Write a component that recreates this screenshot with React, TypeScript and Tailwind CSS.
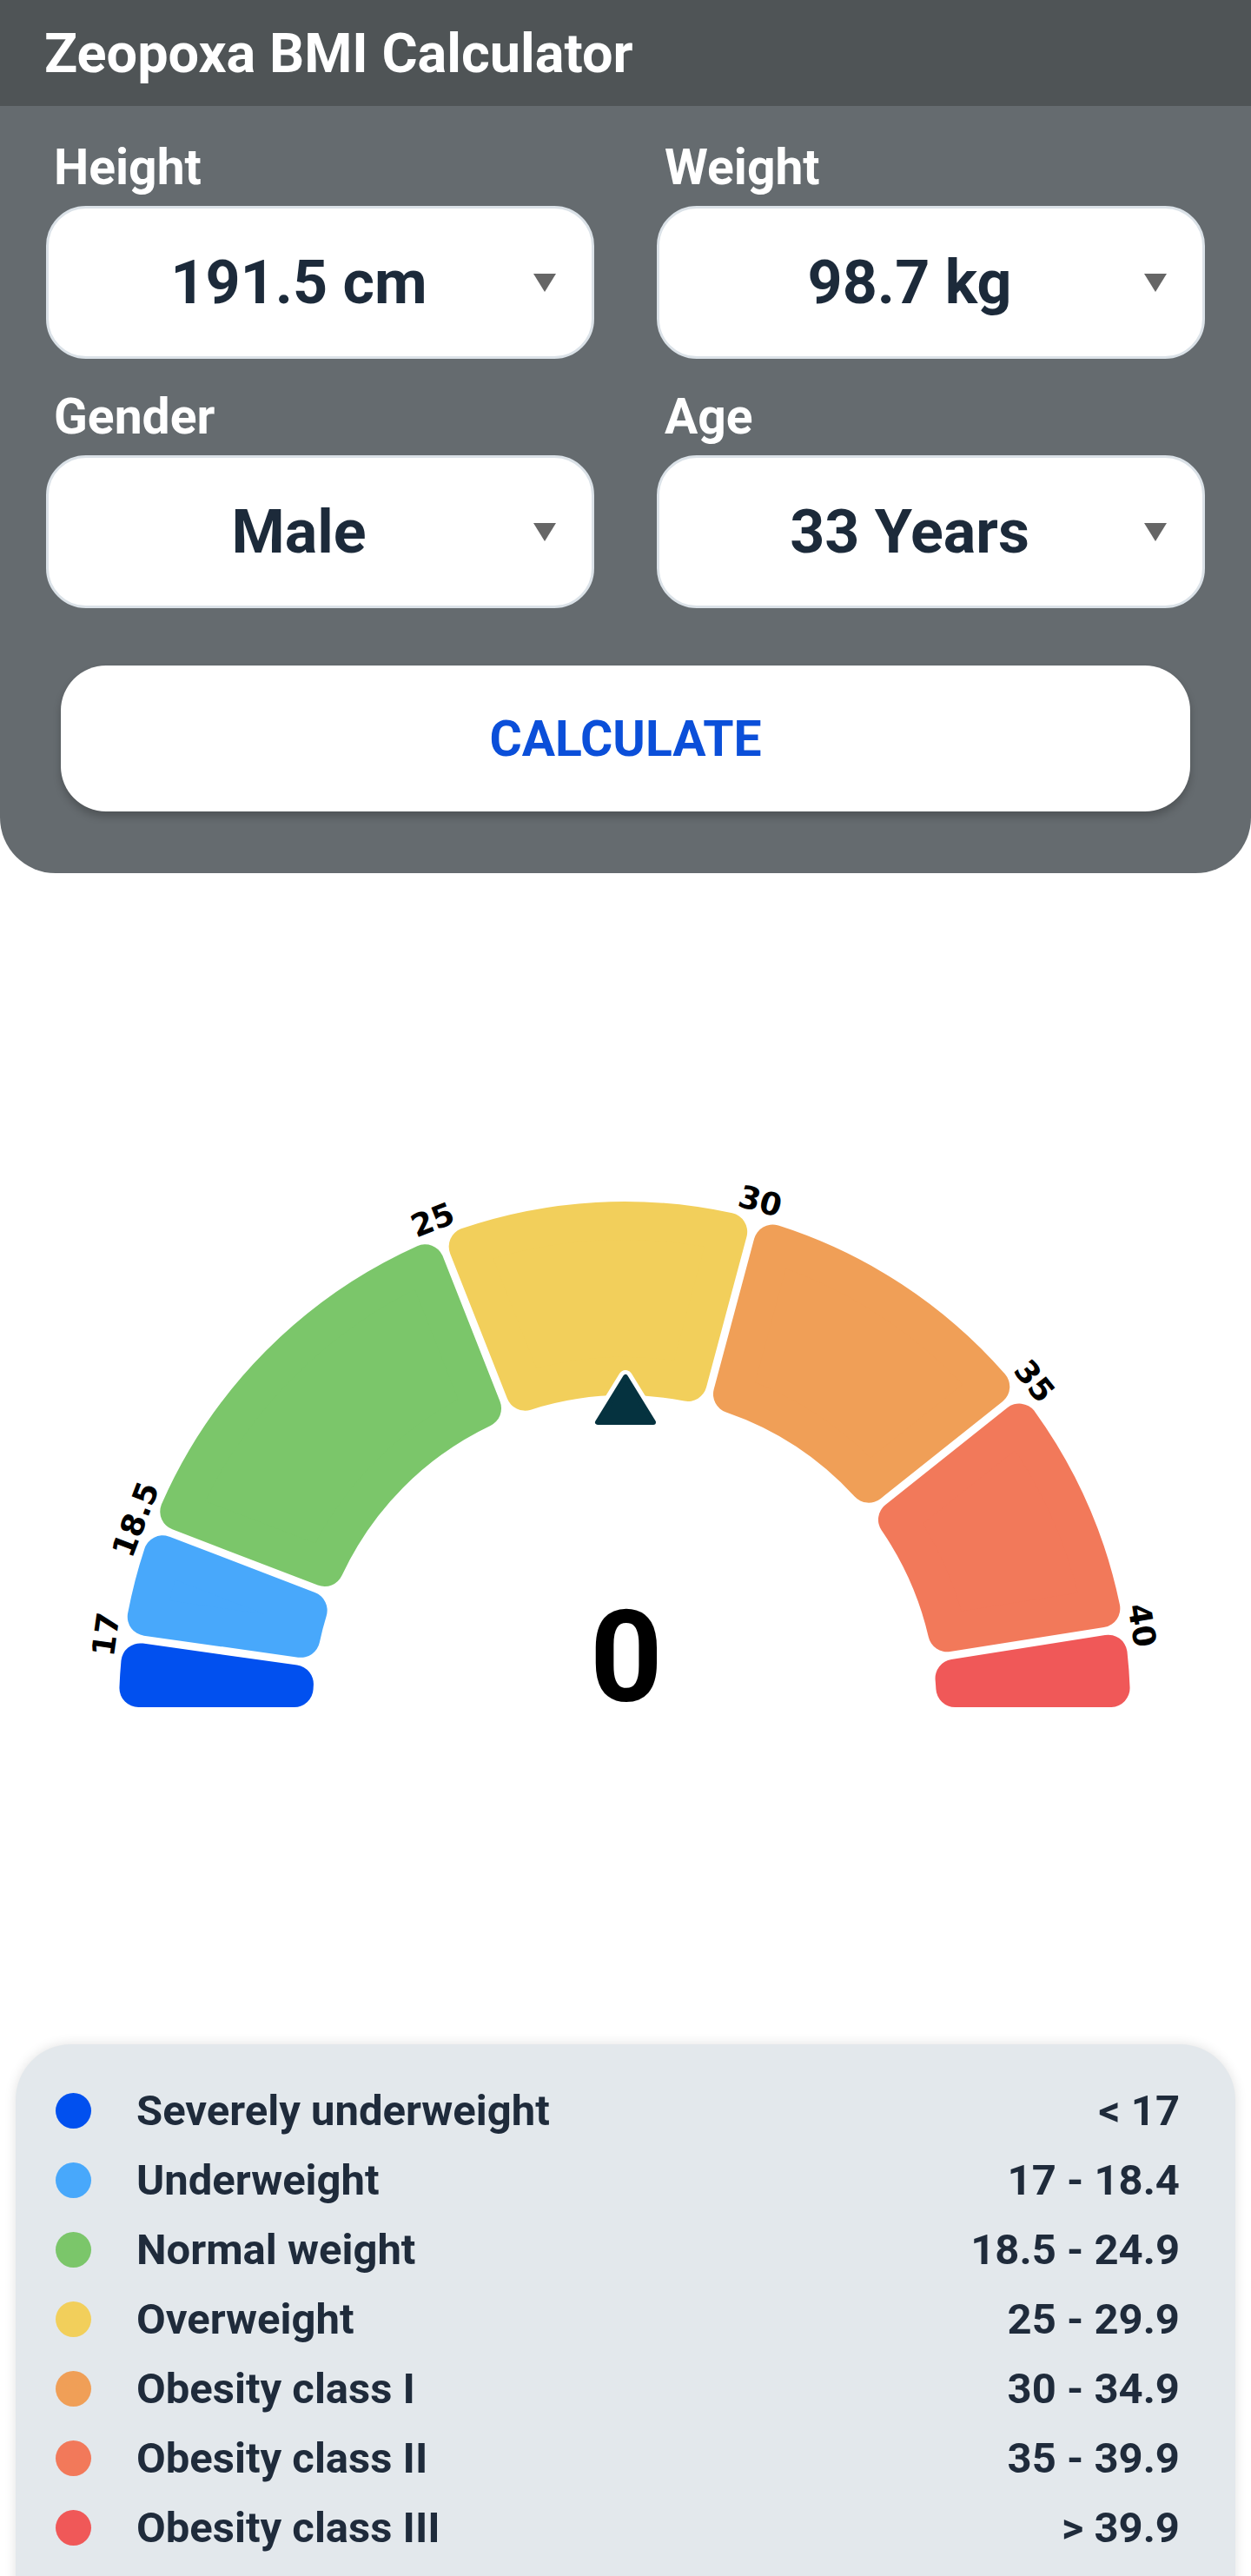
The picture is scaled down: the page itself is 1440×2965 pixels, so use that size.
import React from "react";

const CX = 719;
const CY = 960;
const R_OUT = 582;
const R_IN = 359;
const CORNER = 22;
const GAP = 9;

const segments = [
  { a0: 0, a1: 8, color: "#0150ef" },
  { a0: 8, a1: 21, color: "#48a8fb" },
  { a0: 21, a1: 68.5, color: "#7bc66a" },
  { a0: 68.5, a1: 105, color: "#f2cf5b" },
  { a0: 105, a1: 141.5, color: "#f09f57" },
  { a0: 141.5, a1: 171, color: "#f2795a" },
  { a0: 171, a1: 180, color: "#f05858" },
];

const ticks = [
  { label: "17", a: 8 },
  { label: "18.5", a: 21 },
  { label: "25", a: 68.5 },
  { label: "30", a: 105 },
  { label: "35", a: 141.5 },
  { label: "40", a: 171 },
];

const legend = [
  { name: "Severely underweight", range: "< 17", color: "#0150ef" },
  { name: "Underweight", range: "17 - 18.4", color: "#48a8fb" },
  { name: "Normal weight", range: "18.5 - 24.9", color: "#7bc66a" },
  { name: "Overweight", range: "25 - 29.9", color: "#f2cf5b" },
  { name: "Obesity class I", range: "30 - 34.9", color: "#f09f57" },
  { name: "Obesity class II", range: "35 - 39.9", color: "#f2795a" },
  { name: "Obesity class III", range: "> 39.9", color: "#f05858" },
];

const rad = (d: number) => (d * Math.PI) / 180;
const deg = (r: number) => (r * 180) / Math.PI;

function pt(rho: number, a: number): [number, number] {
  return [CX - rho * Math.cos(rad(a)), CY - rho * Math.sin(rad(a))];
}

// inset sector, later grown back by a round-joined stroke => rounded corners
function sectorPath(a0: number, a1: number, first: boolean, last: boolean) {
  const d0 = CORNER + (first ? 0 : GAP / 2);
  const d1 = CORNER + (last ? 0 : GAP / 2);
  const ro = R_OUT - CORNER;
  const ri = R_IN + CORNER;
  const o0 = a0 + deg(Math.asin(d0 / ro));
  const o1 = a1 - deg(Math.asin(d1 / ro));
  const i0 = a0 + deg(Math.asin(d0 / ri));
  const i1 = a1 - deg(Math.asin(d1 / ri));
  const f = (p: [number, number]) => `${p[0].toFixed(2)} ${p[1].toFixed(2)}`;
  let inner: string;
  if (i0 >= i1) {
    // offset lines meet before the inner arc
    const n0 = [Math.sin(rad(a0)), -Math.cos(rad(a0))];
    const n1 = [-Math.sin(rad(a1)), Math.cos(rad(a1))];
    const det = n0[0] * n1[1] - n0[1] * n1[0];
    const x = (d0 * n1[1] - n0[1] * d1) / det;
    const y = (n0[0] * d1 - d0 * n1[0]) / det;
    inner = `L ${f([CX + x, CY + y])}`;
  } else {
    inner = `L ${f(pt(ri, i1))} A ${ri} ${ri} 0 0 0 ${f(pt(ri, i0))}`;
  }
  return `M ${f(pt(ro, o0))} A ${ro} ${ro} 0 0 1 ${f(pt(ro, o1))} ${inner} Z`;
}

function Caret() {
  return (
    <svg width="26" height="21" viewBox="0 0 26 21" className="shrink-0">
      <path d="M0 0 H26 L13 21 Z" fill="#666666" />
    </svg>
  );
}

function Field({ label, value }: { label: string; value: string }) {
  return (
    <div>
      <p className="mb-[16px] pl-[9px] text-[57px] font-bold leading-none text-white">{label}</p>
      <div className="flex h-[176px] items-center rounded-[46px] border-[3px] border-[#dbe2e8] bg-white pl-[18px] pr-[41px]">
        <span className="flex-1 text-center text-[70px] font-bold leading-none text-[#1c2a3a]">{value}</span>
        <Caret />
      </div>
    </div>
  );
}

function Gauge() {
  return (
    <svg width="1440" height="1348" viewBox="0 0 1440 1348" className="block">
      {segments.map((s, i) => {
        const d = sectorPath(s.a0, s.a1, i === 0, i === segments.length - 1);
        return (
          <path
            key={s.color}
            d={d}
            fill={s.color}
            stroke={s.color}
            strokeWidth={CORNER * 2}
            strokeLinejoin="round"
          />
        );
      })}
      {ticks.map((t) => {
        const [x, y] = pt(603, t.a);
        return (
          <text
            key={t.label}
            transform={`translate(${x.toFixed(1)} ${y.toFixed(1)}) rotate(${t.a - 90})`}
            textAnchor="middle"
            dominantBaseline="central"
            fontFamily="'DejaVu Sans', sans-serif"
            fontWeight="bold"
            fontSize="36"
            fill="#000"
          >
            {t.label}
          </text>
        );
      })}
      <polygon
        points="720,580 688,632 752,632"
        fill="#ffffff"
        stroke="#ffffff"
        strokeWidth="16"
        strokeLinejoin="round"
      />
      <polygon
        points="720,580 688,632 752,632"
        fill="#05323f"
        stroke="#05323f"
        strokeWidth="6"
        strokeLinejoin="round"
      />
      <text
        x="721"
        y="953"
        textAnchor="middle"
        fontFamily="Roboto, 'Open Sans', sans-serif"
        fontWeight="bold"
        fontSize="146"
        fill="#000"
      >
        0
      </text>
    </svg>
  );
}

export default function App() {
  return (
    <div className="h-[2965px] w-[1440px] overflow-hidden bg-white font-['Roboto','Liberation_Sans',sans-serif]">
      <header className="flex h-[122px] items-center bg-[#4f5456] pl-[51px]">
        <h1 className="text-[63px] font-bold leading-none text-white">Zeopoxa BMI Calculator</h1>
      </header>

      <section className="rounded-b-[64px] bg-[#656b6f] px-[53px] pb-[71px] pt-[42px]">
        <div className="grid grid-cols-2 gap-x-[72px] gap-y-[38px]">
          <Field label="Height" value="191.5 cm" />
          <Field label="Weight" value="98.7 kg" />
          <Field label="Gender" value="Male" />
          <Field label="Age" value="33 Years" />
        </div>
        <button
          type="button"
          className="mx-[17px] mt-[66px] flex h-[168px] w-[1300px] items-center justify-center rounded-[52px] bg-white text-[57px] font-bold leading-none text-[#0b4fd9] shadow-[0_6px_10px_rgba(0,0,0,0.22)]"
        >
          CALCULATE
        </button>
      </section>

      <Gauge />

      <div className="mx-[18px] h-[700px] rounded-t-[64px] bg-[#e3e8ec] pl-[46px] pr-[64px] pt-[36px] shadow-[0_0_14px_rgba(0,0,0,0.12)]">
        {legend.map((row) => (
          <div key={row.name} className="flex h-[80px] items-center">
            <span className="h-[41px] w-[41px] shrink-0 rounded-full" style={{ backgroundColor: row.color }} />
            <span className="ml-[52px] flex-1 text-[49px] font-bold leading-none text-[#1f2b3b]">{row.name}</span>
            <span className="text-[49px] font-bold leading-none text-[#1f2b3b]">{row.range}</span>
          </div>
        ))}
      </div>
    </div>
  );
}
